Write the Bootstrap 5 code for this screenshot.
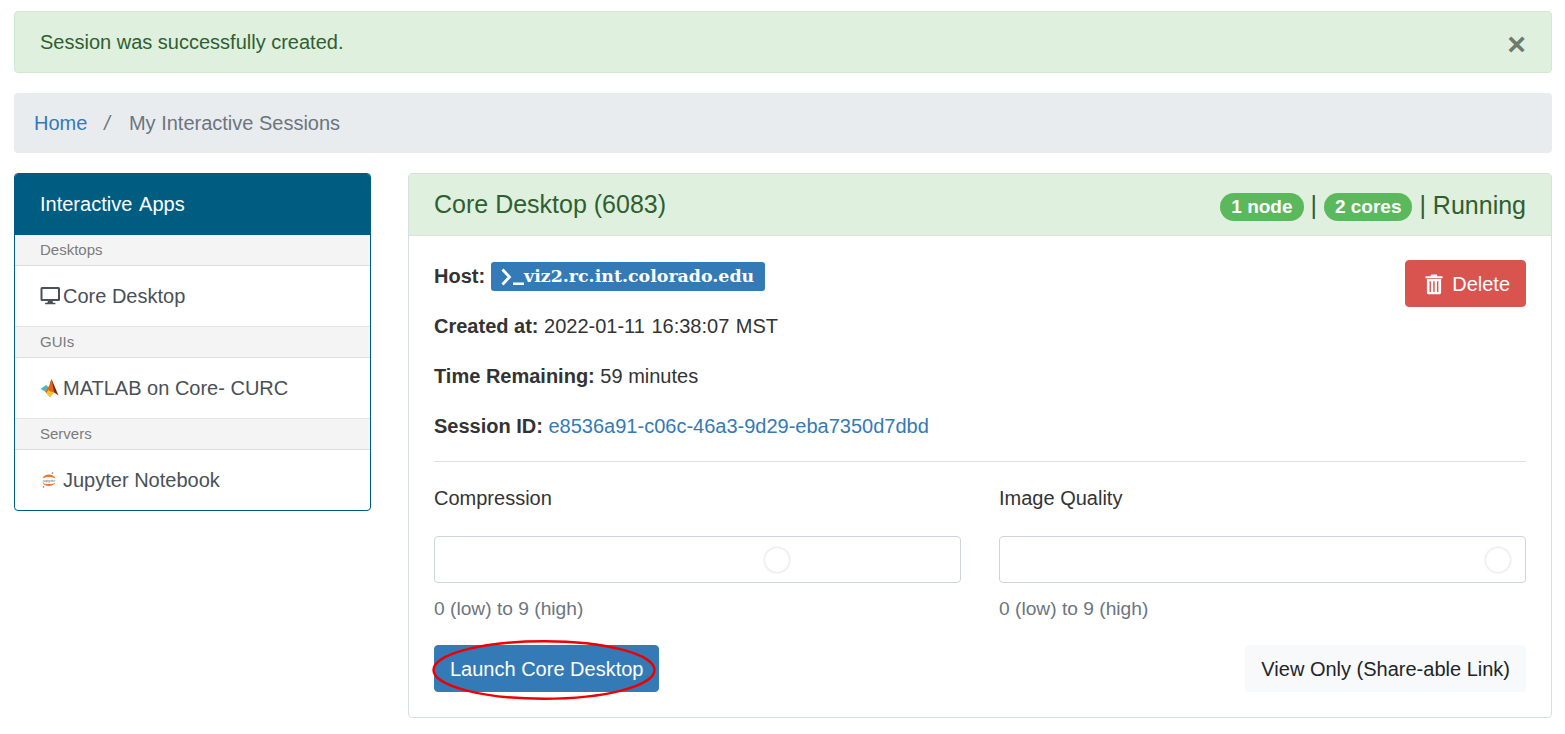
<!doctype html>
<html lang="en">
<head>
<meta charset="utf-8">
<title>My Interactive Sessions</title>
<link href="https://cdn.jsdelivr.net/npm/bootstrap@5.3.0/dist/css/bootstrap.min.css" rel="stylesheet">
<style>
html,body{height:100%;overflow:hidden}
body{font-family:"Liberation Sans",Arial,sans-serif;font-size:20px;line-height:1.5;color:#333;padding:11px 13px 0 14px;background:#fff}
a{text-decoration:none;color:#337ab7}
.flash{--bs-alert-bg:#dff0df;--bs-alert-border-color:#d2e8d2;--bs-alert-color:#2f5f30;--bs-alert-padding-x:25px;--bs-alert-padding-y:15px;--bs-alert-margin-bottom:20px;--bs-alert-border-radius:4px}
.flash-x{font-size:32px;line-height:30px;font-weight:700;color:#6f7a6c;background:none;border:0;padding:0;margin-top:2px;margin-bottom:-2px;margin-right:0}
.crumbs{--bs-breadcrumb-bg:#e9ecef;--bs-breadcrumb-padding-x:20px;--bs-breadcrumb-padding-y:15px;--bs-breadcrumb-margin-bottom:20px;--bs-breadcrumb-border-radius:4px;--bs-breadcrumb-item-padding-x:17px;--bs-breadcrumb-divider-color:#6c757d;--bs-breadcrumb-item-active-color:#6c757d}
.crumbs .breadcrumb-item+.breadcrumb-item::before{font-style:italic;padding-right:19px}
.side{width:357px;flex:none;border:1px solid #005d82;border-radius:4px;overflow:hidden}
.side-head{background:#005d82;color:#fff;padding:16px 26px 14px;margin:-1px -1px 0;height:62px;word-spacing:2.4px}
.side-sec{background:#f4f4f4;color:#7b7b7b;font-size:15px;line-height:22.5px;padding:4px 25px 3px;border-bottom:1px solid #ddd;height:31px}
.side-item{color:#495057;padding:15px 25px;height:61px;border-bottom:1px solid #e4e4e4;display:flex;align-items:center}
.side-item:last-child{border-bottom:0;height:60px}
.side-ico{width:23px;flex:none;display:block}
.main{flex:1;margin-left:37px;--bs-card-border-color:#d9dee3;--bs-card-border-radius:4px;--bs-card-inner-border-radius:3px;height:545px}
.main-head{background:#dff0df;color:#2f5f30;border-bottom:1px solid #d2e8d2;padding:0 25px;height:62px;font-size:25px;line-height:1.2}
.main-title{margin-top:-2px}
.main-meta{margin-top:2px}
.pill{--bs-badge-font-size:19px;--bs-badge-font-weight:700;--bs-badge-padding-x:11px;--bs-badge-padding-y:4px;background:#5cb85c;line-height:20px;vertical-align:middle;margin-top:1px}
.main-body{padding:25px 25px 0}
.infoline{margin-bottom:20px;height:30px;white-space:nowrap}
.infoline-host{display:flex;align-items:center;gap:6px}
.host{display:inline-flex;align-items:center;background:#337ab7;color:#fff;border-radius:3px;height:29px;padding:0 11px 0 10px;font-family:"DejaVu Serif",serif;font-weight:700;font-size:17.4px;margin-top:1px}
.stretchy{word-spacing:1px}
.btn-del{--bs-btn-bg:#d9534f;--bs-btn-border-color:#d9534f;--bs-btn-color:#fff;--bs-btn-hover-bg:#c9302c;--bs-btn-hover-color:#fff;font-size:20px;padding:8px 15px 8px 19px;height:47px;border-radius:4px;line-height:30px;display:flex;align-items:center;gap:9px;margin-top:-1px}
.rule{margin:0 0 21px;border-color:#ccc;opacity:.6}
.cols{column-gap:38px;display:grid;grid-template-columns:1fr 1fr}
.lbl{height:30px;margin-bottom:23px}
.slide{display:block;width:100%;height:47px;padding:0 15px;border:1px solid #ced4da;border-radius:4px;background:#fff;appearance:none;-webkit-appearance:none}
.slide::-webkit-slider-runnable-track{background:transparent;height:24px}
.slide::-webkit-slider-thumb{-webkit-appearance:none;width:24px;height:24px;border-radius:50%;background:#fff;border:0;box-shadow:0 0 3px rgba(0,0,0,.22)}
.hint{color:#6c757d;height:30px;margin-top:11px;font-size:19.2px;line-height:30px}
.actions{margin-top:21px}
.btn-launch{--bs-btn-bg:#337ab7;--bs-btn-border-color:#337ab7;--bs-btn-color:#fff;--bs-btn-hover-bg:#337ab7;--bs-btn-hover-color:#fff;font-size:20px;line-height:30px;padding:8px 15px 7px;height:47px;border-radius:4px}
.btn-view{--bs-btn-bg:#f8f9fa;--bs-btn-border-color:#f8f9fa;--bs-btn-color:#212529;--bs-btn-hover-bg:#f8f9fa;--bs-btn-hover-color:#212529;font-size:20px;line-height:30px;padding:8px 15px 7px;height:47px;border-radius:4px}
.circled{position:relative;display:inline-block}
.oval{position:absolute;left:-2px;top:-5px;width:224px;height:60px;pointer-events:none;overflow:visible}
</style>
</head>
<body>
<div class="alert flash d-flex justify-content-between align-items-center" role="alert">
  <span>Session was successfully created.</span>
  <button type="button" class="flash-x" aria-label="Close">&times;</button>
</div>
<nav aria-label="breadcrumb">
  <ol class="breadcrumb crumbs">
    <li class="breadcrumb-item"><a href="#">Home</a></li>
    <li class="breadcrumb-item active" aria-current="page">My Interactive Sessions</li>
  </ol>
</nav>
<div class="d-flex align-items-start">
  <aside class="side">
    <div class="side-head">Interactive Apps</div>
    <div class="side-sec">Desktops</div>
    <a class="side-item" href="#"><svg class="side-ico" width="23" height="20" viewBox="0 0 23 20"><path fill="#495057" fill-rule="evenodd" d="M2 1h16.500A1.500 1.500 0 0 1 20 2.500v11a1.500 1.500 0 0 1-1.500 1.500H12.600l.5 1.800h2.300v1.500H5.100v-1.500h2.300l.5-1.800H2A1.500 1.500 0 0 1 .5 13.500v-11A1.500 1.500 0 0 1 2 1zM2.500 3v10h15.500V3z"/></svg>Core Desktop</a>
    <div class="side-sec">GUIs</div>
    <a class="side-item" href="#"><svg class="side-ico" width="23" height="20" viewBox="0 0 23 20"><polygon fill="#4db8c4" points="0.500,11 6,7 9,9.500 5,13.500"/><polygon fill="#7d2a10" points="11.500,1 18.500,17.500 13.500,14 10,6"/><polygon fill="#e2661a" points="11.500,1 14,14 10,19 5,13.500 9,8"/><polygon fill="#f7c326" points="8,12 10.500,13.500 13.500,14 10,19 6.500,15"/></svg>MATLAB on Core- CURC</a>
    <div class="side-sec">Servers</div>
    <a class="side-item" href="#"><svg class="side-ico" width="23" height="20" viewBox="0 0 23 20"><circle cx="12.500" cy="3" r="0.800" fill="#767677"/><circle cx="3.500" cy="17" r="0.800" fill="#767677"/><path fill="#f37726" d="M2.500 8.500C4 3.200 13.500 3.200 15.500 8.500 12.500 6.400 5 6.400 2.500 8.500zM2.500 12.500C4 17 13.500 17 15.500 12.500 12.500 14.600 5 14.600 2.500 12.500z"/><text x="9" y="11.700" font-size="4.200" text-anchor="middle" fill="#6a6a6a" font-family="Liberation Sans">jupyter</text></svg>Jupyter Notebook</a>
  </aside>
  <section class="card main">
    <div class="main-head d-flex justify-content-between align-items-center">
      <span class="main-title">Core Desktop (6083)</span>
      <span class="text-nowrap main-meta"><span class="badge rounded-pill pill">1 node</span> | <span class="badge rounded-pill pill">2 cores</span> | Running</span>
    </div>
    <div class="main-body">
      <div class="d-flex justify-content-between align-items-start">
        <div>
          <div class="infoline infoline-host"><strong>Host:</strong><span class="host"><svg width="12" height="18" viewBox="0 0 12 18"><path fill="none" stroke="#fff" stroke-width="2.800" d="M1.500 1.500l7 7.500-7 7.500"/></svg><svg width="11" height="18" viewBox="0 0 11 18"><rect x="0" y="14.500" width="11" height="2.500" fill="#fff"/></svg>viz2.rc.int.colorado.edu</span></div>
          <div class="infoline"><strong>Created at:</strong> <span class="stretchy">2022-01-11 16:38:07 MST</span></div>
          <div class="infoline"><strong>Time Remaining:</strong> 59 minutes</div>
          <div class="infoline"><strong>Session ID:</strong> <a href="#">e8536a91-c06c-46a3-9d29-eba7350d7dbd</a></div>
        </div>
        <a href="#" class="btn btn-del"><svg width="18" height="22" viewBox="0 0 19 22"><path fill="#fff" fill-rule="evenodd" d="M0.500 2.800h5.300L6.600 1h5.800l.8 1.800h5.300v2H.5zM2 5.800h15v14.400a1.500 1.500 0 0 1-1.500 1.500h-12A1.500 1.500 0 0 1 2 20.200zM4.800 8v11.500h1.500V8zM8.700 8v11.500h1.500V8zM12.600 8v11.500h1.500V8z"/></svg>Delete</a>
      </div>
      <hr class="rule">
      <div class="cols">
        <div>
          <div class="lbl">Compression</div>
          <input class="slide" type="range" min="0" max="9" step="0.01" value="6.02" aria-label="Compression">
          <div class="hint">0 (low) to 9 (high)</div>
        </div>
        <div>
          <div class="lbl">Image Quality</div>
          <input class="slide" type="range" min="0" max="9" value="9" aria-label="Image Quality">
          <div class="hint">0 (low) to 9 (high)</div>
        </div>
      </div>
      <div class="actions d-flex justify-content-between">
        <span class="circled"><a href="#" class="btn btn-launch">Launch Core Desktop</a>
          <svg class="oval" viewBox="0 0 224 60"><ellipse cx="112" cy="30" rx="110.500" ry="28.800" fill="none" stroke="#ee0000" stroke-width="2.400"/></svg></span>
        <a href="#" class="btn btn-view">View Only (Share-able Link)</a>
      </div>
    </div>
  </section>
</div>
<script src="https://cdn.jsdelivr.net/npm/bootstrap@5.3.0/dist/js/bootstrap.bundle.min.js"></script>
</body>
</html>
